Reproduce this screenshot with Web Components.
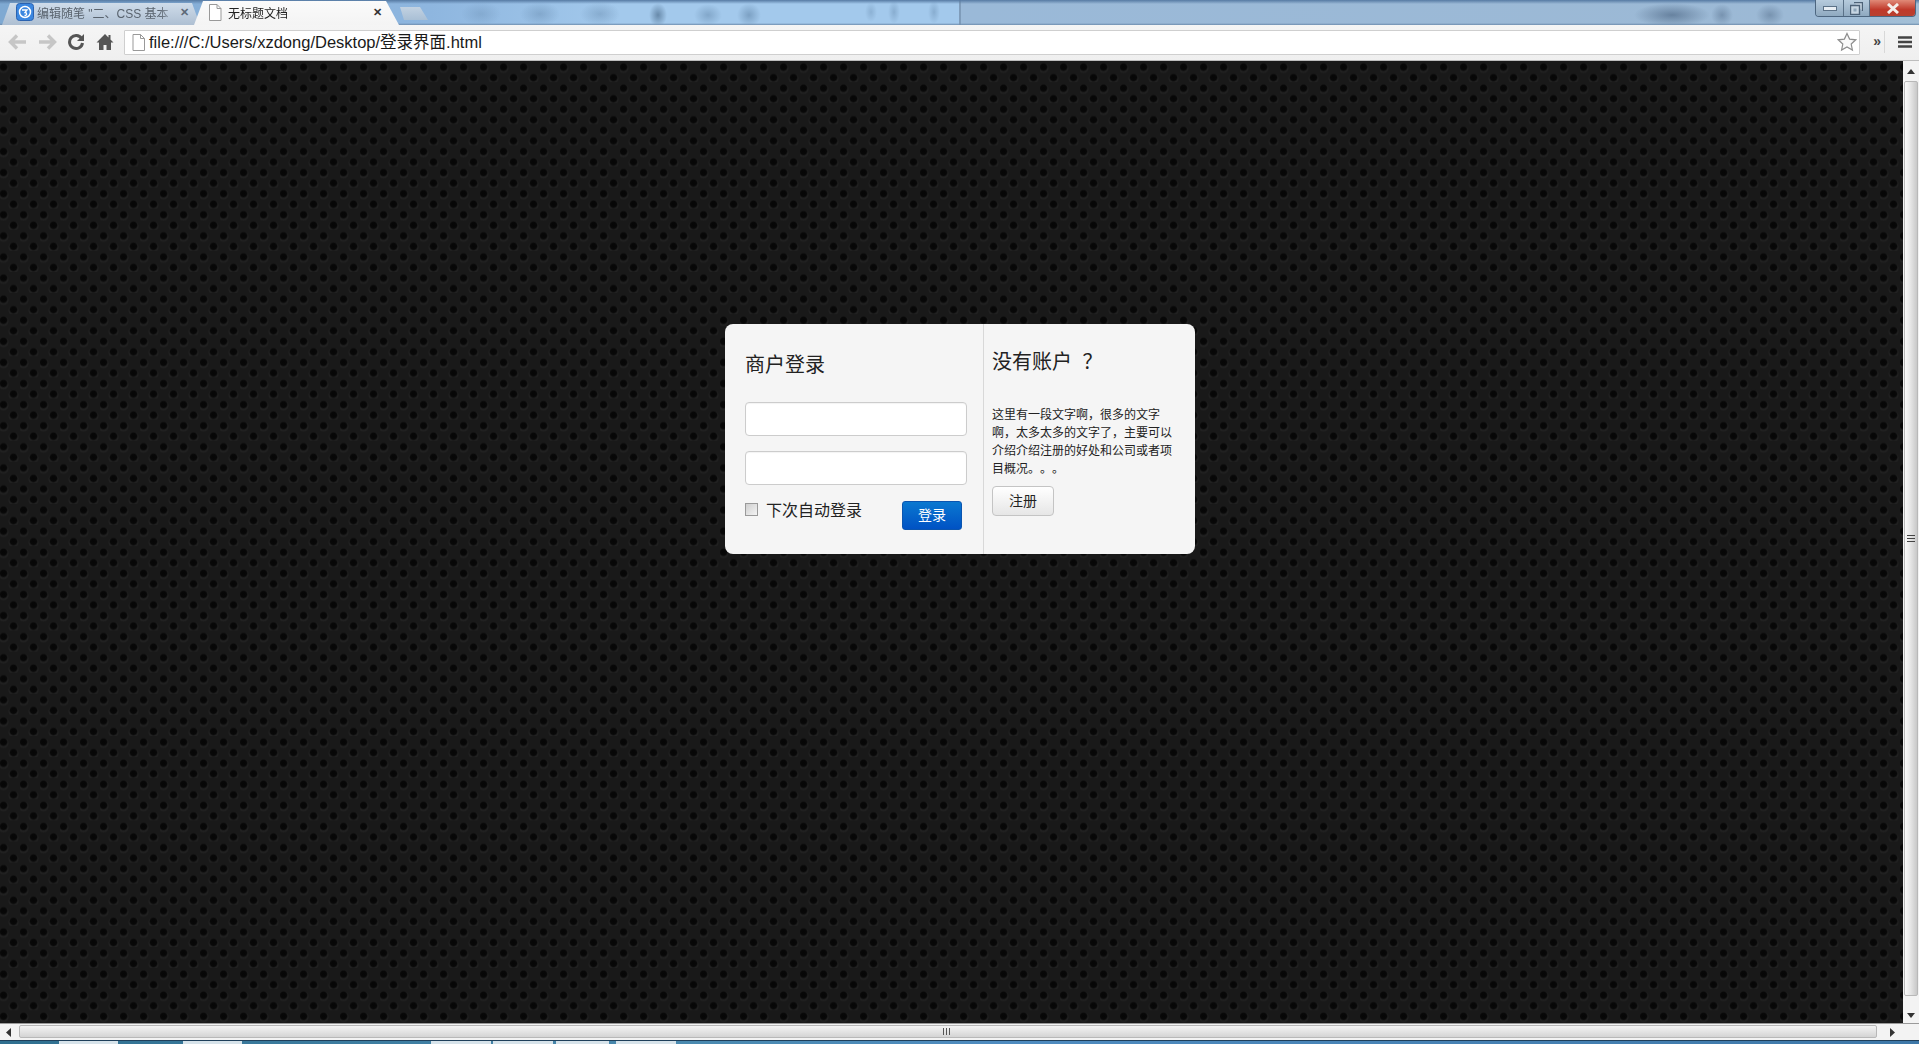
<!DOCTYPE html>
<html lang="zh-CN">
<head>
<meta charset="utf-8">
<title>无标题文档</title>
<style>
    html, body { margin: 0; height: 100%; overflow: hidden; }
    body {
        display: flex;
        flex-direction: column;
        font-family: "Liberation Sans", "Noto Sans CJK SC", sans-serif;
        text-spacing-trim: space-all;
    }
</style>
</head>
<body>
    <tab-strip></tab-strip>
    <nav-toolbar url="file:///C:/Users/xzdong/Desktop/登录界面.html"></nav-toolbar>
    <page-view>
        <login-card>
            <login-panel slot="left">
                <span slot="title">商户登录</span>
                <span slot="remember">下次自动登录</span>
                <span slot="submit">登录</span>
            </login-panel>
            <signup-panel slot="right">
                <span slot="title">没有账户 ？</span>
                <span slot="text">这里有一段文字啊，很多的文字啊，太多太多的文字了，主要可以介绍介绍注册的好处和公司或者项目概况。。。</span>
                <span slot="action">注册</span>
            </signup-panel>
        </login-card>
    </page-view>
    <h-scrollbar></h-scrollbar>
    <task-strip></task-strip>

<script>
class tabStrip extends HTMLElement {
    constructor() {
        super();
        this.attachShadow({ mode: 'open' });
        this.shadowRoot.innerHTML = `
        <div class="tabs">
            <div class="tab back">
                <svg class="fav" width="18" height="18" viewBox="0 0 18 18">
                    <rect x="0.5" y="0.5" width="17" height="17" rx="3" fill="#3b87e0" stroke="#2a62b0"/>
                    <circle cx="9" cy="9" r="5.5" fill="none" stroke="#fff" stroke-width="1.5"/>
                    <path d="M6 7h5l-2 2.5c2 0 2.5 3-.5 3" fill="none" stroke="#fff" stroke-width="1.3"/>
                </svg>
                <span class="label">编辑随笔 "二、CSS 基本</span>
                <span class="close dim">✕</span>
            </div>
            <div class="tab front">
                <svg class="doc" width="14" height="17" viewBox="0 0 14 17">
                    <path d="M1.5.5h7.500l4 4v12h-11.500z" fill="#fff" stroke="#999"/>
                    <path d="M9 .5v4h4" fill="none" stroke="#999"/>
                </svg>
                <span class="label">无标题文档</span>
                <span class="close">✕</span>
            </div>
            <div class="newtab"></div>
        </div>
        <div class="caps">
            <div class="cap"><span class="min"></span></div>
            <div class="cap narrow">
                <svg width="13" height="13" viewBox="0 0 13 13"><path d="M4 .5h8.500V9M.5 3.500h9v9h-9z" fill="#c7d6e3" stroke="#4d6278" stroke-width="1.400"/><path d="M3.500 6.500h3v3h-3z" fill="#8ea5ba"/></svg>
            </div>
            <div class="cap red">
                <svg width="16" height="11" viewBox="0 0 16 11"><path d="M3 1l10 9M13 1L3 10" stroke="#f4eeea" stroke-width="3"/></svg>
            </div>
        </div>
        ${this.getStyles()}
        `;
    }
    getStyles() {
        return `
        <style>
            :host {
                display: flex;
                flex: none;
                height: 25px;
                overflow: hidden;
                background:
                    linear-gradient(#567aa3 0, rgba(86,122,163,0) 4px),
                    linear-gradient(0deg, #6f8eae 0, rgba(111,142,174,0) 2px),
                    radial-gradient(ellipse 20px 12px at 481px 14px, rgba(90,125,160,.28), transparent),
                    radial-gradient(ellipse 20px 12px at 540px 14px, rgba(80,115,150,.32), transparent),
                    radial-gradient(ellipse 20px 12px at 600px 14px, rgba(80,115,150,.32), transparent),
                    radial-gradient(ellipse 9px 12px at 658px 15px, rgba(45,75,105,.5), transparent),
                    radial-gradient(ellipse 14px 11px at 708px 15px, rgba(60,95,130,.32), transparent),
                    radial-gradient(ellipse 12px 12px at 749px 15px, rgba(60,95,130,.38), transparent),
                    radial-gradient(ellipse 6px 10px at 871px 12px, rgba(80,115,150,.28), transparent),
                    radial-gradient(ellipse 6px 12px at 894px 12px, rgba(80,115,150,.32), transparent),
                    radial-gradient(ellipse 6px 12px at 934px 12px, rgba(80,115,150,.32), transparent),
                    radial-gradient(ellipse 38px 12px at 1672px 15px, rgba(60,85,115,.55), transparent),
                    radial-gradient(ellipse 11px 11px at 1722px 15px, rgba(60,85,115,.38), transparent),
                    radial-gradient(ellipse 14px 11px at 1770px 15px, rgba(60,85,115,.38), transparent),
                    linear-gradient(90deg, #7fa9d2 0, #8eb6df 430px, #a3c9ec 620px, #a3c9ec 959px, #7f9cba 959px, #7f9cba 961px, #9ab9d8 961px, #9cb9d5 1815px, #a3bfd6 100%);
            }
            .tabs { display: flex; flex: none; width: 440px; align-items: flex-end; padding-left: 2px; box-sizing: border-box; }
            .tab {
                display: flex;
                align-items: center;
                box-sizing: border-box;
                font-size: 12px;
                font-family: "Liberation Sans", "Noto Sans CJK SC", sans-serif;
            }
            .back {
                width: 198px;
                height: 22px;
                padding: 0 11px 4px 14px;
                color: #59636e;
                background: linear-gradient(#cfdcea, #aebfd2);
                clip-path: polygon(0 100%, 8px 0, 190px 0, 198px 100%);
            }
            .front {
                width: 205px;
                height: 25px;
                margin-left: -6px;
                padding: 0 17px 0 14px;
                color: #222;
                background: linear-gradient(#fbfbfb, #f4f4f4);
                clip-path: polygon(0 100%, 9px 1px, 192px 1px, 205px 100%);
            }
            .fav { flex: none; margin-right: 3px; }
            .doc { flex: none; margin: 0 6px 0 0; }
            .label {
                flex: 1;
                white-space: nowrap;
                overflow: hidden;
                -webkit-mask-image: linear-gradient(90deg, #000 85%, transparent);
            }
            .close { flex: none; font-size: 11px; font-weight: bold; color: #333; }
            .close.dim { color: #5d6a78; }
            .newtab {
                width: 28px;
                height: 13px;
                margin: 0 0 5px 1px;
                background: linear-gradient(#c2d2e2, #a9bfd5);
                clip-path: polygon(0 0, 20px 0, 28px 100%, 4px 100%);
            }
            .caps {
                display: flex;
                flex: none;
                height: 17px;
                margin: 0 3px 0 auto;
                border: 1px solid #4d6680;
                border-top: 0;
                border-radius: 0 0 4px 4px;
                overflow: hidden;
                box-sizing: border-box;
            }
            .cap {
                width: 28px;
                display: flex;
                align-items: center;
                justify-content: center;
                box-sizing: border-box;
                background: linear-gradient(#b6cbdd, #8fa9c0);
                border-right: 1px solid #5a7188;
            }
            .cap.narrow { width: 26px; }
            .cap.red { width: 45px; border: 0; background: linear-gradient(#e08a78, #c0392b 60%, #b8402f); }
            .min { width: 12px; height: 3px; background: #e8eef4; border: 1px solid #5c7288; }
        </style>
        `;
    }
}

class navToolbar extends HTMLElement {
    constructor() {
        super();
        this.attachShadow({ mode: 'open' });
        this.shadowRoot.innerHTML = `
        <div class="btn">
            <svg width="20" height="16" viewBox="0 0 20 16"><path d="M9 1.500L2.500 8 9 14.500M3 8h15" fill="none" stroke="#c6c6c6" stroke-width="3.400"/></svg>
        </div>
        <div class="btn">
            <svg width="20" height="16" viewBox="0 0 20 16"><path d="M11 1.500L17.500 8 11 14.500M17 8H2" fill="none" stroke="#c6c6c6" stroke-width="3.400"/></svg>
        </div>
        <div class="btn">
            <svg width="18" height="18" viewBox="0 0 18 18"><path d="M14.500 5.500A6.500 6.500 0 1 0 15.500 10" fill="none" stroke="#555" stroke-width="3"/><path d="M17 1v7h-7z" fill="#555"/></svg>
        </div>
        <div class="btn">
            <svg width="18" height="18" viewBox="0 0 18 18"><path d="M9 1L.5 9.500H3V17h4.500v-5h3v5H15V9.500h2.500L14.500 6.500V2h-2v2.500z" fill="#555"/></svg>
        </div>
        <div class="omnibox">
            <svg width="13" height="17" viewBox="0 0 13 17"><path d="M1 .5h7.500l4 4v12H1z" fill="#fff" stroke="#999"/><path d="M8.500.5v4h4" fill="none" stroke="#999"/></svg>
            <span class="url">${this.getAttribute('url')}</span>
            <svg class="star" width="20" height="20" viewBox="0 0 20 20"><path d="M10 1.500l2.600 5.600 6.100.7-4.500 4.200 1.200 6-5.400-3-5.400 3 1.200-6L1.300 7.800l6.100-.7z" fill="#fafafa" stroke="#8d8d8d" stroke-width="1.200"/></svg>
        </div>
        <span class="more">»</span>
        <i class="sep"></i>
        <svg class="menu" width="14" height="12" viewBox="0 0 14 12"><path d="M0 1.500h14M0 6h14M0 10.500h14" stroke="#444" stroke-width="2.400"/></svg>
        ${this.getStyles()}
        `;
    }
    getStyles() {
        return `
        <style>
            :host {
                display: flex;
                flex: none;
                align-items: center;
                box-sizing: border-box;
                height: 36px;
                padding: 0 7px 1px 3px;
                background: linear-gradient(#f5f5f5, #efefef);
                border-bottom: 1px solid #bdbdbd;
            }
            .btn { width: 29px; flex: none; display: flex; justify-content: center; align-items: center; }
            .omnibox {
                display: flex;
                flex: none;
                align-items: center;
                box-sizing: border-box;
                width: 1736px;
                height: 25px;
                margin-left: 5px;
                padding: 0 1px 0 7px;
                background: #fff;
                border: 1px solid #cfcfcf;
                border-radius: 1px;
            }
            .url {
                flex: 1;
                margin-left: 4px;
                padding-bottom: 2px;
                font-size: 16.500px;
                color: #1a1a1a;
                white-space: nowrap;
            }
            .star { flex: none; margin-right: 1px; }
            .more { flex: none; width: 21px; text-align: right; font-size: 14px; font-weight: bold; color: #444; position: relative; top: -1px; }
            .sep { flex: none; width: 1px; height: 22px; margin: 0 13px 0 3px; background: #d8d8d8; }
            .menu { flex: none; }
        </style>
        `;
    }
}

class pageView extends HTMLElement {
    constructor() {
        super();
        this.attachShadow({ mode: 'open' });
        this.shadowRoot.innerHTML = `
        <div class="canvas"><slot></slot></div>
        <div class="vbar">
            <svg width="16" height="16" viewBox="0 0 16 16"><path d="M4 11l4-5 4 5z" fill="#333"/></svg>
            <div class="thumb"><span></span></div>
            <svg width="16" height="16" viewBox="0 0 16 16"><path d="M4 6l4 5 4-5z" fill="#333"/></svg>
        </div>
        ${this.getStyles()}
        `;
    }
    getStyles() {
        return `
        <style>
            :host { display: flex; flex: 1; min-height: 0; }
            .canvas {
                flex: 1;
                box-sizing: border-box;
                padding: 263px 0 0 725px;
                background-color: #191919;
                background-image:
                    radial-gradient(circle at 3.500px 6px, #060606 0, #080808 3px, transparent 4.500px),
                    radial-gradient(circle at 13.500px 16.500px, #060606 0, #080808 3px, transparent 4.500px),
                    radial-gradient(circle at 3.500px 7px, #212121 0, #212121 4.500px, transparent 5.500px),
                    radial-gradient(circle at 13.500px 17.500px, #212121 0, #212121 4.500px, transparent 5.500px);
                background-size: 20px 21.100px;
            }
            .vbar {
                flex: none;
                width: 16px;
                display: flex;
                flex-direction: column;
                background: #f3f3f3;
            }
            .vbar svg { flex: none; margin-top: 2px; }
            .thumb {
                flex: 1;
                margin: 2px 1px 9px;
                display: flex;
                align-items: center;
                justify-content: center;
                background: linear-gradient(90deg, #fafafa, #e6e6e6 45%, #c8c8c8);
                border: 1px solid #b8b8b8;
                border-radius: 2px;
            }
            .thumb span { width: 8px; height: 7px; background: repeating-linear-gradient(#444 0 1px, transparent 1px 3px); }
        </style>
        `;
    }
}

class loginCard extends HTMLElement {
    constructor() {
        super();
        this.attachShadow({ mode: 'open' });
        this.shadowRoot.innerHTML = `
        <slot name="left"></slot>
        <slot name="right"></slot>
        <style>
            :host {
                display: flex;
                width: 470px;
                height: 230px;
                background: #f5f5f5;
                border-radius: 8px;
                color: #222;
                font-family: "Liberation Sans", "Noto Sans CJK SC", sans-serif;
            }
        </style>
        `;
    }
}

class loginPanel extends HTMLElement {
    constructor() {
        super();
        this.attachShadow({ mode: 'open' });
        this.shadowRoot.innerHTML = `
        <h2><slot name="title"></slot></h2>
        <input type="text">
        <input type="password">
        <div class="row">
            <label><input type="checkbox"><slot name="remember"></slot></label>
            <button><slot name="submit"></slot></button>
        </div>
        ${this.getStyles()}
        `;
    }
    getStyles() {
        return `
        <style>
            :host {
                display: block;
                box-sizing: border-box;
                flex: none;
                width: 259px;
                padding: 27px 16px 0 20px;
                border-right: 1px solid #d8d8d8;
            }
            h2 { margin: 0 0 23px; font-size: 20px; font-weight: normal; line-height: 28px; }
            input[type=text], input[type=password] {
                display: block;
                box-sizing: border-box;
                width: 222px;
                height: 34px;
                margin: 0 0 15px;
                background: #fff;
                border: 1px solid #ccc;
                border-radius: 4px;
                box-shadow: inset 0 1px 1px rgba(0,0,0,.05);
            }
            .row { display: flex; align-items: flex-start; justify-content: space-between; margin-top: -1px; padding-right: 5px; }
            label { display: flex; align-items: center; gap: 8px; font-size: 16px; line-height: 24px; }
            input[type=checkbox] {
                appearance: none;
                flex: none;
                width: 13px;
                height: 13px;
                margin: -3px 0 0;
                border: 1px solid #9a9a9a;
                background: linear-gradient(135deg, #cfcfcf, #f4f4f4);
            }
            button {
                width: 60px;
                height: 29px;
                margin-top: 2px;
                padding: 0 0 4px;
                color: #fff;
                font: 14px "Liberation Sans", "Noto Sans CJK SC", sans-serif;
                background: linear-gradient(#0a78d0, #0052c4);
                border: 1px solid #0a55b0;
                border-radius: 3px;
            }
        </style>
        `;
    }
}

class signupPanel extends HTMLElement {
    constructor() {
        super();
        this.attachShadow({ mode: 'open' });
        this.shadowRoot.innerHTML = `
        <h2><slot name="title"></slot></h2>
        <p><slot name="text"></slot></p>
        <button><slot name="action"></slot></button>
        ${this.getStyles()}
        `;
    }
    getStyles() {
        return `
        <style>
            :host { display: block; flex: 1; box-sizing: border-box; padding: 24px 20px 0 8px; }
            h2 { margin: 0 0 30px; font-size: 20px; font-weight: normal; line-height: 28px; word-spacing: 5px; }
            p { margin: 0 0 8px; font-size: 12px; line-height: 18px; color: #222; }
            button {
                display: block;
                width: 62px;
                height: 30px;
                padding: 0 0 2px;
                color: #222;
                font: 14px "Liberation Sans", "Noto Sans CJK SC", sans-serif;
                background: linear-gradient(#fff, #e6e6e6);
                border: 1px solid #c4c4c4;
                border-radius: 4px;
            }
        </style>
        `;
    }
}

class hScrollbar extends HTMLElement {
    constructor() {
        super();
        this.attachShadow({ mode: 'open' });
        this.shadowRoot.innerHTML = `
        <svg width="19" height="17" viewBox="0 0 19 17"><path d="M11 4L6 8.500l5 4.500z" fill="#333"/></svg>
        <div class="thumb"><span></span></div>
        <svg class="right" width="26" height="17" viewBox="0 0 26 17"><path d="M13 4l5 4.500-5 4.500z" fill="#333"/></svg>
        <style>
            :host {
                display: flex;
                flex: none;
                height: 17px;
                align-items: stretch;
                background: #f3f3f3;
                border-top: 1px solid #9a9a9a;
                box-sizing: border-box;
            }
            svg { flex: none; }
            .thumb {
                width: 1858px;
                display: flex;
                align-items: center;
                justify-content: center;
                padding-right: 4px;
                margin: 1px 0 2px;
                background: linear-gradient(#f4f4f4, #d4d4d4);
                border: 1px solid #b8b8b8;
                border-radius: 2px;
                box-sizing: border-box;
            }
            .thumb span { width: 7px; height: 7px; background: repeating-linear-gradient(90deg, #555 0 1px, transparent 1px 3px); }
        </style>
        `;
    }
}

class taskStrip extends HTMLElement {
    constructor() {
        super();
        this.attachShadow({ mode: 'open' });
        this.shadowRoot.innerHTML = `
        <i style="margin-left:59px;width:59px"></i>
        <i style="margin-left:65px;width:59px"></i>
        <i style="margin-left:189px;width:60px"></i>
        <i style="margin-left:2px;width:60px"></i>
        <i style="margin-left:3px;width:53px"></i>
        <i style="margin-left:7px;width:60px"></i>
        <style>
            :host {
                display: flex;
                flex: none;
                height: 4px;
                background: linear-gradient(90deg, #2f6f8f, #4a8ab0 700px, #4f8cc0 1000px, #3e78a8);
                border-top: 1px solid #1f3f5a;
                box-sizing: border-box;
            }
            i { flex: none; height: 3px; background: #d7e3ea; }
        </style>
        `;
    }
}

customElements.define('tab-strip', tabStrip);
customElements.define('nav-toolbar', navToolbar);
customElements.define('page-view', pageView);
customElements.define('login-card', loginCard);
customElements.define('login-panel', loginPanel);
customElements.define('signup-panel', signupPanel);
customElements.define('h-scrollbar', hScrollbar);
customElements.define('task-strip', taskStrip);
</script>
</body>
</html>
